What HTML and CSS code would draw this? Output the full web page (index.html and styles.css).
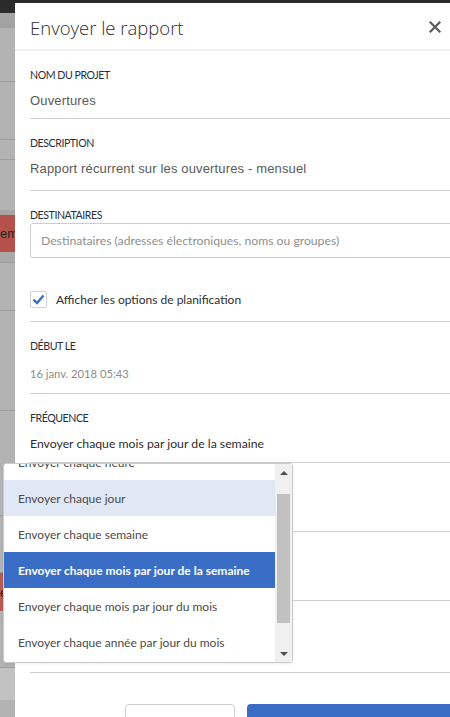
FILE: index.html
```html
<!DOCTYPE html>
<html lang="fr">
<head>
<meta charset="utf-8">
<link rel="stylesheet" href="styles.css">
</head>
<body>
<div class="app">
  <div class="topbar"></div>
  <div class="s s1"></div>
  <div class="s s2"></div>
  <div class="s s3"></div>
  <div class="s s4"></div>
  <div class="s s5"></div>
  <div class="s s6"></div>
  <div class="s red"><span>em</span></div>
  <div class="s s7"></div>
  <div class="s s8"></div>
  <div class="s s9"></div>
  <div class="s s10"></div>
  <div class="s s11"></div>
  <div class="s red2"><span>e</span></div>
  <div class="s s12"></div>
  <div class="s s13"></div>
</div>

<div class="dialog">
  <div class="header">
    <h1 class="title">Envoyer le rapport</h1>
    <svg class="close" width="12" height="12" viewBox="0 0 12 12"><path d="M1.5 1.5L10.5 10.5M10.5 1.5L1.5 10.5" stroke="#5a5a5a" stroke-width="2.2" stroke-linecap="square"/></svg>
  </div>
  <div class="body">
    <div class="field f-name">
      <div class="label">NOM DU PROJET</div>
      <div class="value plain">Ouvertures</div>
    </div>
    <div class="field f-desc">
      <div class="label">DESCRIPTION</div>
      <div class="value plain">Rapport récurrent sur les ouvertures - mensuel</div>
    </div>
    <div class="field f-dest">
      <div class="label">DESTINATAIRES</div>
      <div class="input">Destinataires (adresses électroniques, noms ou groupes)</div>
    </div>
    <div class="checkrow">
      <span class="checkbox"><svg width="13" height="11" viewBox="0 0 13 11"><path d="M1.5 5.5L5 9L11.5 1.5" fill="none" stroke="#3b6ec5" stroke-width="2.4"/></svg></span>
      <span class="checklabel">Afficher les options de planification</span>
    </div>
    <div class="field f-start">
      <div class="label">DÉBUT LE</div>
      <div class="value muted">16 janv. 2018 05:43</div>
    </div>
    <div class="field f-freq">
      <div class="label">FRÉQUENCE</div>
      <div class="value">Envoyer chaque mois par jour de la semaine</div>
    </div>
    <div class="field f-h1"></div>
    <div class="field f-h2"></div>
    <div class="field f-h3"></div>
    <div class="footer">
      <span class="btn btn-secondary"></span>
      <span class="btn btn-primary"></span>
    </div>
  </div>
</div>

<div class="dropdown">
  <div class="list">
    <div class="items">
      <div class="item">Envoyer chaque heure</div>
      <div class="item hover">Envoyer chaque jour</div>
      <div class="item">Envoyer chaque semaine</div>
      <div class="item selected">Envoyer chaque mois par jour de la semaine</div>
      <div class="item">Envoyer chaque mois par jour du mois</div>
      <div class="item">Envoyer chaque année par jour du mois</div>
    </div>
  </div>
  <div class="scrollbar">
    <div class="arrow up"></div>
    <div class="track"><div class="thumb"></div></div>
    <div class="arrow down"></div>
  </div>
</div>
</body>
</html>
```

FILE: styles.css
```css
html, body {
  margin: 0;
  padding: 0;
  width: 450px;
  height: 717px;
  overflow: hidden;
  background: #b3b3b3;
}

.app {
  display: flex;
  flex-direction: column;
  width: 450px;
  height: 717px;
}
.topbar { height: 13px; background: #2b2b2b; flex: none; }
.s { flex: none; background: #b3b3b3; border-bottom: 1px solid #9c9c9c; box-sizing: border-box; }
.s1 { height: 15px; background: #a3a3a3; border: none; }
.s2 { height: 54px; }
.s3 { height: 58px; }
.s4 { height: 20px; }
.s5 { height: 50px; border: none; }
.s6 { height: 5px; background: #a4a4a4; border: none; }
.red, .red2 {
  height: 37px; background: #b5514b; border: none;
  font-family: "Liberation Sans", Arial, sans-serif; font-size: 13px; color: #222;
  display: flex; align-items: center;
}
.red2 { height: 38px; background: #b65a55; }
.s7 { height: 11px; background: #a9a9a9; }
.s8 { height: 48px; }
.s9 { height: 100px; }
.s10 { height: 105px; }
.s11 { height: 57px; }
.s12 { height: 57px; }
.s13 { height: 32px; background: #c2c2c2; border: none; }

.dialog {
  position: absolute;
  left: 15px;
  top: 3px;
  width: 460px;
  height: 740px;
  background: #fff;
  font-family: "Lato", "Open Sans", sans-serif;
}

.header {
  height: 48px;
  padding: 0 15px;
  display: flex;
  align-items: center;
  justify-content: space-between;
  border-bottom: 2px solid #efefef;
  box-sizing: border-box;
  width: 435px;
}
.title {
  margin: 0;
  padding-top: 2px;
  font-family: "Open Sans", sans-serif;
  font-weight: 300;
  font-size: 18.5px;
  color: #2d2d2d;
}
.close { margin-right: -6px; margin-top: 2px; }

.body {
  padding-left: 15px;
}

.field {
  border-bottom: 1px solid #cfcfcf;
}
.f-name { height: 67px; }
.f-desc { height: 71px; }
.f-dest { border-bottom: none; }
.f-start { height: 71px; }
.f-freq { height: 68px; }
.f-h1, .f-h2 { height: 68px; }
.f-h3 { height: 71px; }

.label {
  padding-top: 17px;
  line-height: 14px;
  height: 14px;
  font-size: 10.6px;
  letter-spacing: -0.45px;
  color: #26313f;
}
.value {
  margin-top: 10px;
  line-height: 18px;
  font-size: 12.25px;
  color: #2d2d2d;
}
.f-desc .value { margin-top: 10px; }
.f-start .value { margin-top: 12px; }
.value.plain {
  font-family: "Liberation Sans", Arial, sans-serif;
  font-size: 13px;
  letter-spacing: 0.15px;
  color: #5a5a5a;
}
.value.muted { color: #8a8a8a; font-size: 11.2px; }

.input {
  margin-top: 1px;
  height: 35px;
  box-sizing: border-box;
  border: 1px solid #cdcdcd;
  border-radius: 3px;
  padding: 0 10px;
  display: flex;
  align-items: center;
  font-size: 12.2px;
  color: #909090;
}

.checkrow {
  display: flex;
  align-items: center;
  height: 64px;
  box-sizing: border-box;
  padding-top: 20px;
  border-bottom: 1px solid #cfcfcf;
}
.checkbox {
  width: 17px;
  height: 17px;
  box-sizing: border-box;
  border: 1px solid #cfcfcf;
  border-radius: 2px;
  display: flex;
  align-items: center;
  justify-content: center;
  margin-right: 9px;
}
.checklabel {
  font-size: 12px;
  color: #2d2d2d;
}

.footer {
  display: flex;
  gap: 12px;
  padding: 31px 0 0 95px;
}
.btn {
  height: 36px;
  border-radius: 4px;
  box-sizing: border-box;
}
.btn-secondary { width: 110px; border: 1px solid #cfcfcf; background: #fff; }
.btn-primary { width: 220px; background: #3a6ec6; }

.dropdown {
  position: absolute;
  left: 3px;
  top: 463px;
  width: 290px;
  height: 200px;
  box-sizing: border-box;
  background: #fff;
  border: 1px solid #cbcbcb;
  border-radius: 3px;
  display: flex;
  box-shadow: 0 1px 3px rgba(0,0,0,0.08);
  font-family: "Lato", "Open Sans", sans-serif;
}
.list {
  flex: 1;
  overflow: hidden;
}
.items { margin-top: -20px; }
.item {
  height: 36px;
  display: flex;
  align-items: center;
  padding-left: 14px;
  font-size: 12px;
  color: #4b4b4b;
  white-space: nowrap;
}
.item.hover { background: #e1e8f5; }
.item.selected { background: #3a6ec6; color: #fff; font-weight: 700; }

.scrollbar {
  width: 17px;
  background: #f0f0f0;
  display: flex;
  flex-direction: column;
  align-items: center;
}
.arrow { height: 17px; width: 17px; display: flex; align-items: center; justify-content: center; flex: none; }
.arrow::before {
  content: "";
  width: 0; height: 0;
  border-left: 4px solid transparent;
  border-right: 4px solid transparent;
}
.arrow.up::before { border-bottom: 4px solid #505050; }
.arrow.down::before { border-top: 4px solid #505050; }
.track { flex: 1; width: 13px; padding-top: 13px; }
.thumb { height: 129px; background: #c1c1c1; }
```
